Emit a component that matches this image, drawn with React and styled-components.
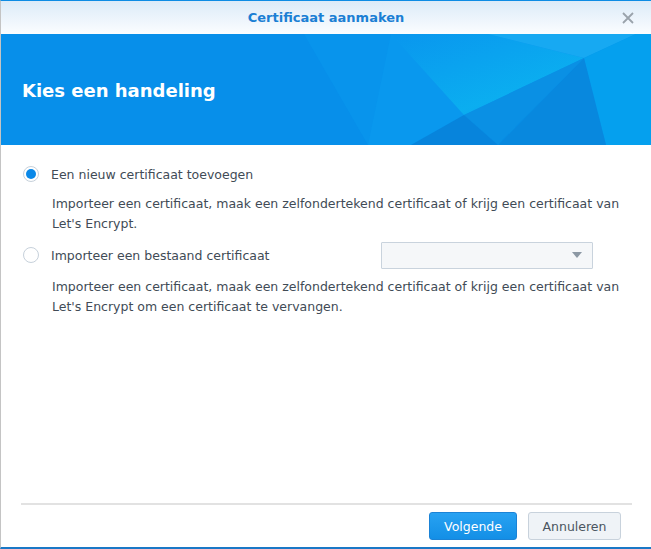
import React, { useState } from "react";
import styled, { createGlobalStyle } from "styled-components";

const GlobalStyle = createGlobalStyle`
  html, body {
    margin: 0;
    padding: 0;
    background: #ffffff;
  }
  body {
    font-family: "DejaVu Sans", Verdana, sans-serif;
  }
`;

const Window = styled.div`
  width: 651px;
  height: 549px;
  box-sizing: border-box;
  display: flex;
  flex-direction: column;
  border-top: 1px solid #0e8ce4;
  border-left: 1px solid #c4c4c4;
  border-bottom: 2px solid #1a78c6;
  background: #fff;
  overflow: hidden;
`;

const TitleBar = styled.div`
  height: 33px;
  flex: none;
  position: relative;
  display: flex;
  align-items: center;
  justify-content: center;
  background: linear-gradient(#dcebf8, #fbfdff);
  color: #1b7fd4;
  font-size: 13px;
  font-weight: bold;
`;

const Close = styled.button`
  position: absolute;
  right: 16px;
  top: 10px;
  width: 14px;
  height: 14px;
  padding: 0;
  border: 0;
  background: none;
  cursor: pointer;
`;

const Banner = styled.div`
  height: 111px;
  flex: none;
  position: relative;
  display: flex;
  align-items: center;
  padding: 2px 21px 0;
  box-sizing: border-box;
  background: #078fea;
  overflow: hidden;
`;

const BannerArt = styled.svg`
  position: absolute;
  inset: 0;
  width: 100%;
  height: 100%;
`;

const BannerTitle = styled.h1`
  position: relative;
  margin: 0;
  color: #fff;
  font-size: 18px;
  font-weight: bold;
`;

const Body = styled.div`
  flex: 1;
  padding: 15px 20px 0 22px;
  color: #414b56;
  font-size: 12.5px;
`;

const OptionRow = styled.label`
  height: 28px;
  display: flex;
  align-items: center;
  margin-top: ${(p) => p.$gap || 0}px;
  cursor: pointer;
`;

const RadioDot = styled.span`
  width: 16px;
  height: 16px;
  box-sizing: border-box;
  border-radius: 50%;
  border: 1px solid #c7d1db;
  background: #fff;
  display: flex;
  align-items: center;
  justify-content: center;
  margin-right: 12px;
  flex: none;

  &::after {
    content: "";
    width: 10px;
    height: 10px;
    border-radius: 50%;
    background: #0a88e8;
    display: ${(p) => (p.$on ? "block" : "none")};
  }
`;

const OptionLabel = styled.span`
  width: 330px;
`;

const Desc = styled.p`
  margin: ${(p) => p.$top}px 0 0 29px;
  line-height: 20px;
`;

const Select = styled.div`
  width: 212px;
  height: 27px;
  box-sizing: border-box;
  border: 1px solid #c9d3dd;
  background: #f5f7f9;
  border-radius: 1px;
  display: flex;
  align-items: center;
  justify-content: flex-end;
  padding-right: 10px;

  &::after {
    content: "";
    border-left: 5px solid transparent;
    border-right: 5px solid transparent;
    border-top: 6px solid #8c98a4;
  }
`;

const Footer = styled.div`
  flex: none;
  margin: 0 19px 0 20px;
  border-top: 2px solid #e2e2e2;
  padding: 7px 11px 7px 0;
  display: flex;
  justify-content: flex-end;
  gap: 11px;
`;

const Button = styled.button`
  height: 28px;
  box-sizing: border-box;
  border-radius: 3px;
  font-family: inherit;
  font-size: 12.5px;
  padding: 0 12px;
  cursor: pointer;
  border: 1px solid ${(p) => (p.$primary ? "#1b83d6" : "#c8d2dc")};
  background: ${(p) => (p.$primary ? "linear-gradient(#28a2f2, #138fe6)" : "#eff3f7")};
  color: ${(p) => (p.$primary ? "#fff" : "#4b5560")};
  min-width: ${(p) => p.$w}px;
`;

export default function App() {
  const [choice, setChoice] = useState("new");
  return (
    <>
      <GlobalStyle />
      <Window>
        <TitleBar>
          Certificaat aanmaken
          <Close aria-label="Sluiten">
            <svg width="14" height="14" viewBox="0 0 14 14">
              <path d="M2 2 L12 12 M12 2 L2 12" stroke="#9aa3ab" strokeWidth="1.8" />
            </svg>
          </Close>
        </TitleBar>
        <Banner>
          <BannerArt viewBox="0 0 650 111" preserveAspectRatio="none">
            <defs>
              <linearGradient id="glow" x1="0" y1="0" x2="0.8" y2="1">
                <stop offset="0" stopColor="#0996ee" />
                <stop offset="0.75" stopColor="#0bb0f0" />
                <stop offset="1" stopColor="#0aa4ec" />
              </linearGradient>
            </defs>
            <polygon points="303,0 650,0 650,111 367,111" fill="#0894ec" />
            <polygon points="390,0 487,0 583,24 463,81 410,111 367,111" fill="#0998ee" />
            <polygon points="390,0 487,0 583,24 463,81" fill="url(#glow)" opacity="0.9" />
            <polygon points="487,0 635,0 583,24" fill="#17a9f2" />
            <polygon points="635,0 650,0 650,111 605,111 583,24" fill="#05a0ee" />
            <polygon points="463,81 583,24 497,111" fill="#0a90e4" />
            <polygon points="463,81 497,111 410,111" fill="#0784dc" />
            <polygon points="583,24 605,111 497,111" fill="#0888de" />
          </BannerArt>
          <BannerTitle>Kies een handeling</BannerTitle>
        </Banner>
        <Body>
          <OptionRow onClick={() => setChoice("new")}>
            <RadioDot $on={choice === "new"} />
            <OptionLabel>Een nieuw certificaat toevoegen</OptionLabel>
          </OptionRow>
          <Desc $top={6}>
            Importeer een certificaat, maak een zelfondertekend certificaat of krijg een certificaat van
            <br />
            Let's Encrypt.
          </Desc>
          <OptionRow $gap={7} onClick={() => setChoice("replace")}>
            <RadioDot $on={choice === "replace"} />
            <OptionLabel>Importeer een bestaand certificaat</OptionLabel>
            <Select />
          </OptionRow>
          <Desc $top={8}>
            Importeer een certificaat, maak een zelfondertekend certificaat of krijg een certificaat van
            <br />
            Let's Encrypt om een certificaat te vervangen.
          </Desc>
        </Body>
        <Footer>
          <Button $primary $w={88}>Volgende</Button>
          <Button $w={93}>Annuleren</Button>
        </Footer>
      </Window>
    </>
  );
}
